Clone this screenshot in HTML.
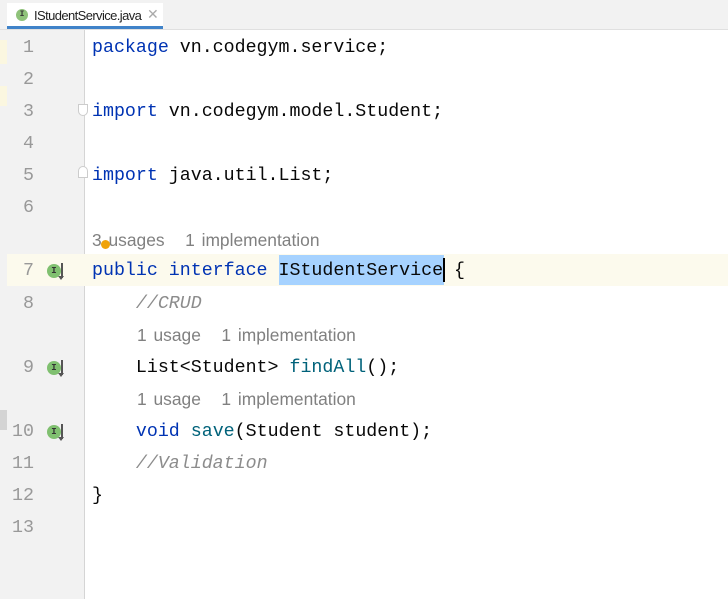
<!DOCTYPE html>
<html><head><style>
body{margin:0;width:728px;height:599px;background:#fff;overflow:hidden;position:relative;font-family:"Liberation Mono",monospace}
.tabbar{position:absolute;left:0;top:0;width:728px;height:29px;background:#f2f2f2;border-bottom:1px solid #e0e0e0}
.tab{position:absolute;left:7px;top:3px;width:156px;height:26px;background:#fff;border-bottom:3px solid #4083c9;box-sizing:border-box;font:13px "Liberation Sans",sans-serif;color:#222}
.tab .ic{position:absolute;left:9px;top:6px;width:12px;height:12px;border-radius:50%;background:#8fc27a;font:bold 8px "Liberation Mono";color:#333;text-align:center;line-height:12px}
.tab .t{position:absolute;left:27px;top:5px;letter-spacing:-0.6px}
.tab .x{position:absolute;left:140px;top:3px;color:#aaa;font-size:14px}
.strip{position:absolute;left:0;top:30px;width:7px;height:569px;background:#f2f2f2}
.gutter{position:absolute;left:7px;top:30px;width:77px;height:569px;background:#f2f2f2;border-right:1px solid #d5d5d5}
.row{position:absolute;left:0;height:32px;width:728px;line-height:32px;font-size:18.3px;white-space:pre}
.ln{position:absolute;width:34px;text-align:right;color:#999;left:0}
.code{position:absolute;left:92px;color:#080808}
.k{color:#0033b3}.f{color:#00627a}.c{color:#8c8c8c;font-style:italic}
.hint{position:absolute;font:17.4px "Liberation Sans",sans-serif;color:#808080;height:32px;line-height:32px;word-spacing:2px}
.gi{position:absolute;left:47px;top:9px;width:14px;height:14px;border-radius:50%;background:#80c070;font:bold 9px "Liberation Mono";color:#333;text-align:center;line-height:14px}
.ar{position:absolute;left:61px;top:8px;width:1.5px;height:15px;background:#555}
.ar:after{content:"";position:absolute;left:-3px;top:13px;border:3.5px solid transparent;border-top:4px solid #555}
</style></head><body>
<div class="tabbar"><div class="tab"><div class="ic">I</div><span class="t">IStudentService.java</span><span class="x">✕</span></div></div>
<div class="strip"></div>
<div style="position:absolute;left:0;top:40px;width:7px;height:24px;background:#fbf7e0"></div>
<div style="position:absolute;left:0;top:86px;width:7px;height:20px;background:#fbf7e0"></div>
<div style="position:absolute;left:0;top:410px;width:7px;height:20px;background:#d4d4d4"></div>
<div class="gutter"></div>
<div style="position:absolute;left:7px;top:254px;width:721px;height:32px;background:#fcfaed"></div>
<div style="position:absolute;left:279px;top:255px;width:165px;height:30px;background:#a6d2ff"></div>
<div style="position:absolute;left:443px;top:258px;width:2px;height:24px;background:#000"></div>

<div class="row" style="top:32px"><span class="ln">1</span><span class="code"><span class="k">package</span> vn.codegym.service;</span></div>
<div class="row" style="top:64px"><span class="ln">2</span></div>
<div class="row" style="top:96px"><span class="ln">3</span><span class="code"><span class="k">import</span> vn.codegym.model.Student;</span></div>
<div class="row" style="top:128px"><span class="ln">4</span></div>
<div class="row" style="top:160px"><span class="ln">5</span><span class="code"><span class="k">import</span> java.util.List;</span></div>
<div class="row" style="top:192px"><span class="ln">6</span></div>
<div class="hint" style="left:92px;top:224px">3 usages&nbsp;&nbsp;&nbsp;1 implementation</div>
<div style="position:absolute;left:101px;top:240px;width:9px;height:9px;border-radius:50%;background:#f0a30a"></div>
<div class="row" style="top:255px"><span class="ln">7</span><span class="gi">I</span><span class="ar"></span><span class="code"><span class="k">public interface</span> IStudentService {</span></div>
<div class="row" style="top:288px"><span class="ln">8</span><span class="code">    <span class="c">//CRUD</span></span></div>
<div class="hint" style="left:137px;top:319px">1 usage&nbsp;&nbsp;&nbsp;1 implementation</div>
<div class="row" style="top:352px"><span class="ln">9</span><span class="gi">I</span><span class="ar"></span><span class="code">    List&lt;Student&gt; <span class="f">findAll</span>();</span></div>
<div class="hint" style="left:137px;top:383px">1 usage&nbsp;&nbsp;&nbsp;1 implementation</div>
<div class="row" style="top:416px"><span class="ln">10</span><span class="gi">I</span><span class="ar"></span><span class="code">    <span class="k">void</span> <span class="f">save</span>(Student student);</span></div>
<div class="row" style="top:448px"><span class="ln">11</span><span class="code">    <span class="c">//Validation</span></span></div>
<div class="row" style="top:480px"><span class="ln">12</span><span class="code">}</span></div>
<div class="row" style="top:512px"><span class="ln">13</span></div>
<div style="position:absolute;left:78px;top:104px;width:10px;height:12px;border:1px solid #ccc;border-radius:0 0 5px 5px;background:#fff;box-sizing:border-box"></div>
<div style="position:absolute;left:78px;top:166px;width:10px;height:12px;border:1px solid #ccc;border-radius:5px 5px 0 0;background:#fff;box-sizing:border-box"></div>
</body></html>
